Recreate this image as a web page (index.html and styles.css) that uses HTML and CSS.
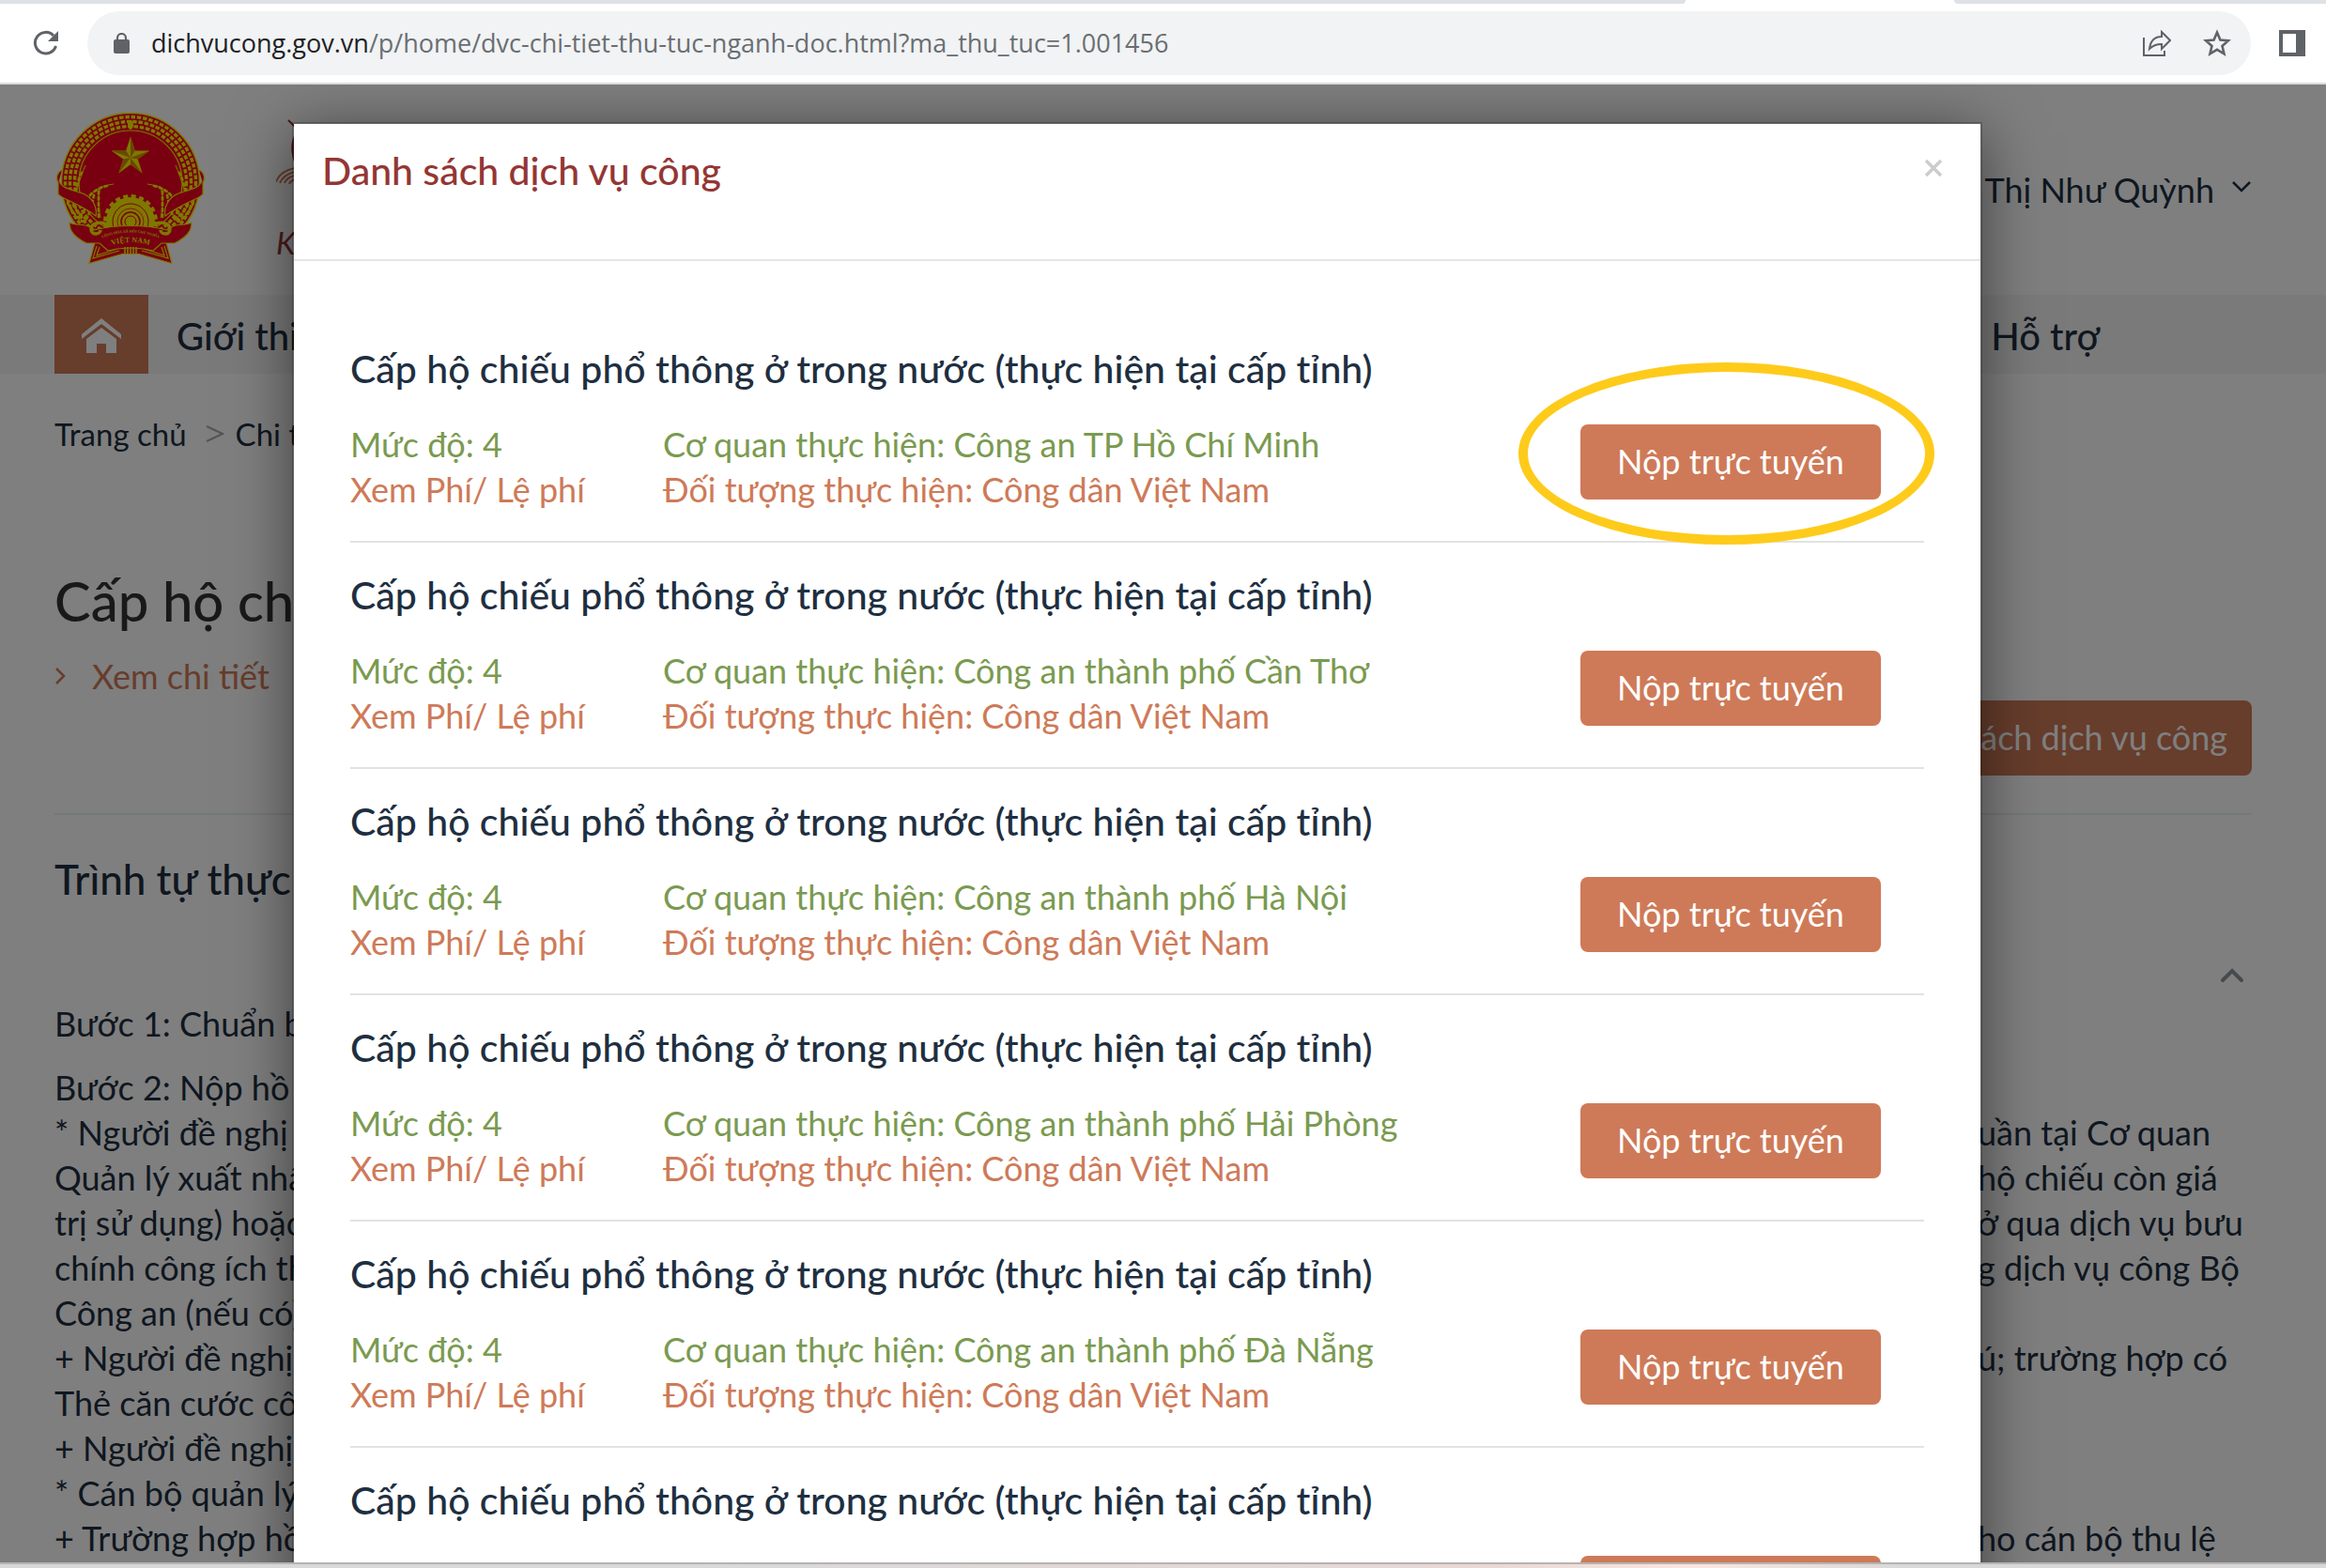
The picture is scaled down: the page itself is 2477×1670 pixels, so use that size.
FILE: index.html
```
<!DOCTYPE html>
<html lang="vi">
<head>
    <meta charset="UTF-8">
    <meta name="viewport" content="width=device-width, initial-scale=1.0">
    <title>Cổng Dịch vụ công Quốc gia</title>
    <link rel="stylesheet" href="styles.css">
</head>
<body>
    <!-- Browser bar -->
    <div class="tab-strip"><div class="tab-side"></div><div class="tab-active"></div><div class="tab-rest"></div></div>
    <div class="toolbar">
        <button class="icon-btn" aria-label="Reload">
            <svg width="28" height="28" viewBox="0 0 28 28"><path d="M24.500 17A11.300 11.300 0 1 1 22 6" fill="none" stroke="#5f6368" stroke-width="3"/><path d="M27 1v11H16z" fill="#5f6368"/></svg>
        </button>
        <div class="address-bar">
            <svg width="17" height="22" viewBox="0 0 17 22"><rect y="7" width="17" height="15" rx="2" fill="#5f6368"/><path d="M4 8V5.5a4.500 4.500 0 0 1 9 0V8" fill="none" stroke="#5f6368" stroke-width="2.200"/></svg>
            <div class="url"><span>dichvucong.gov.vn</span>/p/home/dvc-chi-tiet-thu-tuc-nganh-doc.html?ma_thu_tuc=1.001456</div>
            <button class="icon-btn" aria-label="Share">
                <svg width="30" height="28" viewBox="0 0 30 28" fill="none" stroke="#5f6368" stroke-width="2"><path d="M1 8v19h22v-5"/><path d="M20 2l9 9-9 9v-5c-6 0-10 2-13 5 1-8 5-13 13-13z"/></svg>
            </button>
            <button class="icon-btn" aria-label="Bookmark">
                <svg width="30" height="30" viewBox="0 0 30 30"><path d="M15 3.500l3.400 8 8.600.7-6.500 5.700 2 8.400L15 21.800l-7.500 4.500 2-8.400L3 12.200l8.600-.7z" fill="none" stroke="#5f6368" stroke-width="2.600"/></svg>
            </button>
        </div>
        <button class="icon-btn" aria-label="Side panel">
            <svg width="28" height="28" viewBox="0 0 28 28"><path d="M0 0h28v28H0zM4 4v20h14V4z" fill="#5f6368" fill-rule="evenodd"/></svg>
        </button>
    </div>

    <div class="viewport">
        <!-- Page behind the modal -->
        <div class="page">
            <header class="site-header">
                <svg class="emblem" viewBox="0 0 158 161">
                    <g stroke="#fff000">
                        <circle cx="79" cy="74" r="73.500" fill="#f00020" stroke-width="1.500"/>
                        <g fill="none" stroke-width="3.400" stroke-dasharray="4.500 1.800">
                            <circle cx="79" cy="74" r="69.500"/>
                            <circle cx="79" cy="74" r="64.500" stroke-dashoffset="3"/>
                            <circle cx="79" cy="74" r="59.500"/>
                        </g>
                        <circle cx="79" cy="74" r="55" fill="#f00020" stroke-width="1.200"/>
                    </g>
                    <ellipse cx="79" cy="13" rx="3" ry="5" fill="#fff000"/>
                    <path d="M79 25.500l4.800 14.900h15.600L86.800 49.500l4.800 14.900L79 55.200l-12.600 9.200 4.800-14.900-12.600-9.100h15.600z" fill="#fff000"/>
                    <path d="M79 25.500V48l4.800-7.600zM99.400 40.400L79 48l7.800 1.500zM91.600 64.400L79 48v7.200zM66.400 64.400L79 48l-7.800 1.500zM58.600 40.400L79 48l-4.800-7.600z" fill="#d09000"/>
                    <!-- rice ears -->
                    <path d="M31 56C24 72 22 82 20 92M61 76C46 78 38 84 32 94M48 78c-5 8-3 24-1 34" fill="none" stroke="#fff000"/>
                    <path d="M127 56c7 16 9 26 11 36M97 76c15 2 23 8 29 18M110 78c5 8 3 24 1 34" fill="none" stroke="#fff000"/>
                    <g fill="none" stroke="#fff000" stroke-width="2.800" stroke-dasharray="2.500 3.600" stroke-linecap="round">
                        <path d="M27 64c-4 8-6 16-8 26M54 78c-9 2-15 6-20 12M45 84v30M40 88c-2 10-4 20-10 28M35 92c-2 8-6 14-12 20M12 96c4 8 8 14 16 20M18 98c3 6 7 11 12 14"/>
                        <path d="M131 64c4 8 6 16 8 26M104 78c9 2 15 6 20 12M113 84v30M118 88c2 10 4 20 10 28M123 92c2 8 6 14 12 20M146 96c-4 8-8 14-16 20M140 98c-3 6-7 11-12 14"/>
                    </g>
                    <!-- gear -->
                    <circle cx="79" cy="116" r="27" fill="none" stroke="#fff000" stroke-width="4" stroke-dasharray="5 3.500"/>
                    <circle cx="79" cy="116" r="26" fill="#fff000"/>
                    <g fill="none" stroke="#f00020"><circle cx="79" cy="116" r="19"/><circle cx="79" cy="116" r="14" stroke-width=".7"/><circle cx="79" cy="116" r="10" stroke-width="1.500"/><circle cx="79" cy="116" r="6"/></g>
                    <!-- ribbon -->
                    <g fill="#f00020" stroke="#fff000" stroke-width="1.200">
                        <path d="M6 61c-5 2-7 8-4 14v12l4 3c12 6 26 12 36 20 2-10-4-20-14-24C16 82 4 80 3 72M152 61c5 2 7 8 4 14v12l-4 3c-12 6-26 12-36 20-2-10 4-20 14-24 12-4 24-6 25-14"/>
                        <path d="M41 138l-6 22.500 35-10h18l35 10-6-22.500z"/>
                        <path d="M14 117c0 10 6 16 18 22h14l9 8c16-4 32-4 48 0l9-8h14c12-6 18-12 18-22-8 4-18 0-26 8-24-6-54-6-78 0-8-8-18-4-26-8z"/>
                    </g>
                    <path d="M43 142l-4 13 28-8M115 142l4 13-28-8M46 143l-3 9 22-7M112 143l3 9-22-7" fill="none" stroke="#fff000" stroke-width="1.200"/>
                    <path d="M73 143v8M76 143v8M79 143v8M82 143v8M85 143v8" stroke="#fff000" stroke-width="1.600"/>
                    <path d="M54 120c-5-5-17-3-17 4s10 6 10 1M104 120c5-5 17-3 17 4s-10 6-10 1" fill="none" stroke="#fff000" stroke-width="3.500"/>
                    <path id="motto" d="M45 135Q79 120 113 135" fill="none"/>
                    <path id="country" d="M56 142Q79 134 102 142" fill="none"/>
                    <text class="motto"><textPath href="#motto" startOffset="50%">CỘNG HÒA XÃ HỘI CHỦ NGHĨA</textPath></text>
                    <text class="country"><textPath href="#country" startOffset="50%">VIỆT NAM</textPath></text>
                </svg>
                <div class="site-brand">
                    <svg width="80" height="76" viewBox="0 0 80 76" fill="none"><path d="M13 8l8 8" stroke="#943634" stroke-width="2"/><path d="M22 22c-6 10-6 20 0 34" stroke="#943634" stroke-width="3"/><path d="M0 74c3-9 10-13 20-15M4 75c3-7 8-10 16-12M9 75c2-5 6-7 11-8M14 76c1-3 3-4 6-5" stroke="#ce7a58" stroke-width="2"/></svg>
                    <em>Kết nối, cung cấp thông tin</em>
                </div>
                <button class="user-menu">Thị Như Quỳnh
                    <svg width="22" height="14" viewBox="0 0 22 14"><path d="M2 2l9 9 9-9" fill="none" stroke="#1e2f41" stroke-width="2.500"/></svg>
                </button>
            </header>
            <nav class="site-nav">
                <a class="home" href="#" aria-label="Trang chủ">
                    <svg width="42" height="38" viewBox="0 0 42 38" fill="#fff"><path d="M21 0L0 17v5L21 6l21 16v-5z"/><path d="M21 10L5 22v15h11V27h10v10h11V22z"/></svg>
                </a>
                <a class="nav-link" href="#">Giới thiệu</a>
                <a class="nav-link nav-help" href="#">Hỗ trợ</a>
            </nav>
            <main class="content">
                <div class="breadcrumb"><a href="#">Trang chủ</a><svg width="20" height="20" viewBox="0 0 20 20"><path d="M1 2l17 8-17 8" fill="none" stroke="#aaa" stroke-width="2"/></svg><span>Chi tiết thủ tục</span></div>
                <h1>Cấp hộ chiếu phổ thông</h1>
                <a class="detail-link" href="#"><svg width="12" height="18" viewBox="0 0 12 18"><path d="M2 1l8 8-8 8" fill="none" stroke="#ce7a58" stroke-width="2.500"/></svg>Xem chi tiết</a>
                <div class="actions"><button class="btn btn-list">Danh sách dịch vụ công</button></div>
                <h2>Trình tự thực hiện</h2>
                <button class="collapse" aria-label="Thu gọn"><svg width="26" height="18" viewBox="0 0 26 18"><path d="M3 14L13 4l10 10" fill="none" stroke="#8d949b" stroke-width="4" stroke-linecap="round"/></svg></button>
                <div class="steps">
                    <p>Bước 1: Chuẩn bị hồ sơ</p>
                    <div class="line"><span>Bước 2: Nộp hồ sơ</span></div>
                    <div class="line"><span>* Người đề nghị</span><span>uần tại Cơ quan</span></div>
                    <div class="line"><span>Quản lý xuất nhập</span><span>hộ chiếu còn giá</span></div>
                    <div class="line"><span>trị sử dụng) hoặc</span><span>ở qua dịch vụ bưu</span></div>
                    <div class="line"><span>chính công ích theo</span><span>g dịch vụ công Bộ</span></div>
                    <div class="line"><span>Công an (nếu có)</span></div>
                    <div class="line"><span>+ Người đề nghị</span><span>ú; trường hợp có</span></div>
                    <div class="line"><span>Thẻ căn cước công</span></div>
                    <div class="line"><span>+ Người đề nghị</span></div>
                    <div class="line"><span>* Cán bộ quản lý</span></div>
                    <div class="line"><span>+ Trường hợp hồ sơ</span><span>ho cán bộ thu lệ</span></div>
                </div>
            </main>
        </div>

        <!-- List of services -->
        <div class="backdrop">
            <div class="modal" role="dialog" aria-labelledby="modalTitle">
                <div class="modal-header">
                    <h3 id="modalTitle">Danh sách dịch vụ công</h3>
                    <button class="close" aria-label="Đóng"><svg width="20" height="20" viewBox="0 0 20 20"><path d="M2 2l16 16M18 2L2 18" stroke="#ccc" stroke-width="3.500"/></svg></button>
                </div>
                <div class="modal-body">
                    <div class="service">
                        <h4>Cấp hộ chiếu phổ thông ở trong nước (thực hiện tại cấp tỉnh)</h4>
                        <div class="service-row">
                            <div class="level"><div>Mức độ: 4</div><a href="#">Xem Phí/ Lệ phí</a></div>
                            <div class="agency"><div>Cơ quan thực hiện: Công an TP Hồ Chí Minh</div><a href="#">Đối tượng thực hiện: Công dân Việt Nam</a></div>
                            <div class="submit"><button class="btn">Nộp trực tuyến</button><div class="highlight"></div></div>
                        </div>
                    </div>
                    <div class="service">
                        <h4>Cấp hộ chiếu phổ thông ở trong nước (thực hiện tại cấp tỉnh)</h4>
                        <div class="service-row">
                            <div class="level"><div>Mức độ: 4</div><a href="#">Xem Phí/ Lệ phí</a></div>
                            <div class="agency"><div>Cơ quan thực hiện: Công an thành phố Cần Thơ</div><a href="#">Đối tượng thực hiện: Công dân Việt Nam</a></div>
                            <div class="submit"><button class="btn">Nộp trực tuyến</button></div>
                        </div>
                    </div>
                    <div class="service">
                        <h4>Cấp hộ chiếu phổ thông ở trong nước (thực hiện tại cấp tỉnh)</h4>
                        <div class="service-row">
                            <div class="level"><div>Mức độ: 4</div><a href="#">Xem Phí/ Lệ phí</a></div>
                            <div class="agency"><div>Cơ quan thực hiện: Công an thành phố Hà Nội</div><a href="#">Đối tượng thực hiện: Công dân Việt Nam</a></div>
                            <div class="submit"><button class="btn">Nộp trực tuyến</button></div>
                        </div>
                    </div>
                    <div class="service">
                        <h4>Cấp hộ chiếu phổ thông ở trong nước (thực hiện tại cấp tỉnh)</h4>
                        <div class="service-row">
                            <div class="level"><div>Mức độ: 4</div><a href="#">Xem Phí/ Lệ phí</a></div>
                            <div class="agency"><div>Cơ quan thực hiện: Công an thành phố Hải Phòng</div><a href="#">Đối tượng thực hiện: Công dân Việt Nam</a></div>
                            <div class="submit"><button class="btn">Nộp trực tuyến</button></div>
                        </div>
                    </div>
                    <div class="service">
                        <h4>Cấp hộ chiếu phổ thông ở trong nước (thực hiện tại cấp tỉnh)</h4>
                        <div class="service-row">
                            <div class="level"><div>Mức độ: 4</div><a href="#">Xem Phí/ Lệ phí</a></div>
                            <div class="agency"><div>Cơ quan thực hiện: Công an thành phố Đà Nẵng</div><a href="#">Đối tượng thực hiện: Công dân Việt Nam</a></div>
                            <div class="submit"><button class="btn">Nộp trực tuyến</button></div>
                        </div>
                    </div>
                    <div class="service">
                        <h4>Cấp hộ chiếu phổ thông ở trong nước (thực hiện tại cấp tỉnh)</h4>
                        <div class="service-row">
                            <div class="level"></div>
                            <div class="agency"></div>
                            <div class="submit"><button class="btn" aria-label="Nộp trực tuyến"></button></div>
                        </div>
                    </div>
                </div>
            </div>
        </div>
    </div>
    <div class="taskbar"></div>
</body>
</html>
```
FILE: styles.css
```
* {
    box-sizing: border-box;
}

body {
    margin: 0;
    height: 100vh;
    display: flex;
    flex-direction: column;
    overflow: hidden;
    background: #fff;
    font-family: Lato, 'Noto Sans', sans-serif;
    font-size: 36px;
    line-height: 48px;
    color: #1e2f41;
}

h1, h2, h3, h4, p {
    margin: 0;
}

a {
    color: inherit;
    text-decoration: none;
}

button {
    font: inherit;
    color: inherit;
    background: none;
    border: none;
    padding: 0;
    cursor: pointer;
}

svg {
    display: block;
    flex: none;
}

/* Browser bar */
.tab-strip {
    display: flex;
    height: 4px;
    flex: none;
}

.tab-side {
    flex: 1795;
    background: #dee1e6;
    border-bottom-right-radius: 8px;
}

.tab-active {
    flex: 286;
}

.tab-rest {
    flex: 396;
    background: #dee1e6;
    border-bottom-left-radius: 8px;
}

.toolbar {
    display: flex;
    align-items: center;
    gap: 30px;
    height: 86px;
    flex: none;
    padding: 0 22px 0 35px;
    border-bottom: 2px solid #dadcdc;
}

.address-bar {
    flex: 1;
    display: flex;
    align-items: center;
    gap: 34px;
    height: 68px;
    padding: 0 21px 0 28px;
    border-radius: 34px;
    background: #f1f3f4;
}

.url {
    flex: 1;
    margin-left: -11px;
    font-family: 'Open Sans', sans-serif;
    font-size: 27px;
    color: #6a6e72;
}

.url span {
    color: #202124;
}

/* Page */
.viewport {
    flex: 1;
    position: relative;
    overflow: hidden;
}

.site-header {
    display: flex;
    height: 224px;
    padding: 30px 79px 0 60px;
}

.emblem {
    width: 158px;
    height: 161px;
}

.motto, .country {
    fill: #fff000;
    font-family: 'Liberation Serif', serif;
    font-weight: bold;
    font-size: 4px;
    text-anchor: middle;
}

.country {
    font-size: 8px;
}

.site-brand {
    flex: 1;
    margin-left: 76px;
    font-size: 33px;
    color: #943634;
}

.site-brand em {
    display: block;
    margin-top: 38px;
}

.user-menu {
    display: flex;
    align-items: center;
    align-self: flex-start;
    gap: 18px;
    margin-top: 58px;
}

.user-menu svg {
    margin-bottom: 6px;
}

.site-nav {
    display: flex;
    align-items: center;
    gap: 30px;
    height: 84px;
    padding: 0 241px 0 58px;
    background: #f5f5f5;
    font-size: 40px;
    font-weight: 500;
}

.home {
    display: flex;
    align-items: center;
    justify-content: center;
    width: 100px;
    height: 84px;
    padding-top: 4px;
    background: #ce7a58;
}

.nav-link {
    padding-top: 4px;
}

.nav-help {
    margin-left: auto;
}

.content {
    padding: 40px 79px 0 58px;
}

.breadcrumb {
    display: flex;
    align-items: center;
    gap: 12px;
    font-size: 33px;
}

.breadcrumb a {
    margin-right: 8px;
}

h1 {
    margin-top: 114px;
    font-size: 58px;
    font-weight: 500;
    line-height: 80px;
    color: #333;
}

.detail-link {
    display: flex;
    align-items: center;
    gap: 28px;
    margin-top: 16px;
    color: #ce7a58;
}

.actions {
    display: flex;
    justify-content: flex-end;
    margin-top: 2px;
    padding-bottom: 40px;
    border-bottom: 2px solid #e6f0f8;
}

.btn {
    height: 80px;
    padding: 0 26px 2px;
    border-radius: 8px;
    background: #ce7a58;
    color: #fff;
}

h2 {
    margin-top: 38px;
    font-size: 44px;
    font-weight: 500;
    line-height: 60px;
}

.collapse {
    display: block;
    margin: 64px 8px 18px auto;
}

.steps p {
    margin-bottom: 20px;
}

.line {
    display: grid;
    grid-template-columns: 1fr 292px;
}

/* Modal */
.backdrop {
    position: absolute;
    inset: 0;
    display: flex;
    justify-content: center;
    align-items: flex-start;
    padding: 40px 55px 0 0;
    background: rgba(0, 0, 0, 0.5);
}

.modal {
    width: 1800px;
    max-width: 90%;
    border: 2px solid rgba(0, 0, 0, 0.2);
    background: #fff;
    background-clip: padding-box;
    box-shadow: 0 10px 60px rgba(0, 0, 0, 0.5);
}

.modal-header {
    display: flex;
    justify-content: space-between;
    align-items: flex-start;
    height: 146px;
    padding: 26px 40px 0 30px;
    border-bottom: 2px solid #e5e5e5;
}

.modal-header h3 {
    font-size: 41px;
    font-weight: 500;
    color: #943634;
}

.close {
    margin-top: 11px;
}

.modal-body {
    padding: 59px 60px;
}

.service {
    padding: 32px 0 31px;
    border-bottom: 2px solid #e2e2e2;
}

.service h4 {
    margin-bottom: 32px;
    font-size: 41px;
    font-weight: 500;
}

.service-row {
    display: flex;
    align-items: flex-start;
    min-height: 96px;
}

.level {
    width: 333px;
}

.agency {
    flex: 1;
}

.level div, .agency div {
    color: #7a9a50;
}

.level a, .agency a {
    color: #ce7a58;
}

.submit {
    position: relative;
    margin: 3px 46px 0 0;
}

.submit .btn {
    display: block;
    width: 320px;
}

/* Ring round the first submit button */
.highlight {
    position: absolute;
    top: -66px;
    left: -66px;
    width: 443px;
    height: 194px;
    border: 10px solid #fecb1b;
    border-radius: 50%;
    pointer-events: none;
}

.taskbar {
    height: 6px;
    flex: none;
    border-top: 2px solid #b5b3b3;
    background: linear-gradient(to right, #d8d8d8 30%, #e8d8d4 64%, #fae6e0 73%, #d8d8d8 82%);
}
```
